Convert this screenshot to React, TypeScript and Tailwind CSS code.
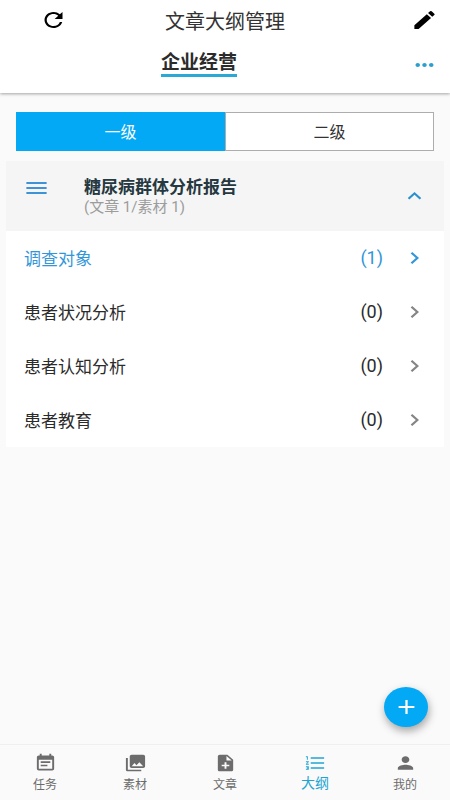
import { useState } from "react";
import type { IconType } from "react-icons";
import {
  MdAdd,
  MdEdit,
  MdEventNote,
  MdFormatListNumbered,
  MdKeyboardArrowRight,
  MdKeyboardArrowUp,
  MdMenu,
  MdMoreHoriz,
  MdNoteAdd,
  MdPerson,
  MdPhotoLibrary,
  MdRefresh,
} from "react-icons/md";

const rows = [
  { name: "调查对象", count: 1 },
  { name: "患者状况分析", count: 0 },
  { name: "患者认知分析", count: 0 },
  { name: "患者教育", count: 0 },
];

const navItems: { label: string; icon: IconType }[] = [
  { label: "任务", icon: MdEventNote },
  { label: "素材", icon: MdPhotoLibrary },
  { label: "文章", icon: MdNoteAdd },
  { label: "大纲", icon: MdFormatListNumbered },
  { label: "我的", icon: MdPerson },
];

function Icon({ of: Glyph, small = false }: { of: IconType; small?: boolean }) {
  return <Glyph preserveAspectRatio="none" aria-hidden className={small ? "h-5 w-[23px]" : "h-6 w-[27px]"} />;
}

export default function App() {
  const [level, setLevel] = useState(0);
  const [open, setOpen] = useState(true);

  return (
    <div className="flex min-h-screen flex-col bg-[#fafafa] font-[Roboto,'Noto_Sans_CJK_SC',sans-serif] text-[#2b2b2b]">
      <header className="bg-white pb-4 shadow-[0_1px_3px_rgba(0,0,0,0.35)]">
        <div className="grid h-11 grid-cols-3 items-center pr-3 pl-10 text-black">
          <button aria-label="刷新" className="justify-self-start pb-1">
            <Icon of={MdRefresh} />
          </button>
          <h1 className="-ml-7 justify-self-center text-xl leading-6 whitespace-nowrap text-[#333]">文章大纲管理</h1>
          <button aria-label="编辑" className="justify-self-end pb-1">
            <Icon of={MdEdit} />
          </button>
        </div>
        <div className="grid grid-cols-[20fr_auto_27fr] items-center px-3 pt-2">
          <a href="#category" className="col-start-2 border-b-3 border-[#2ba9d6] text-[19px] leading-[22px] font-bold">
            企业经营
          </a>
          <button aria-label="更多" className="justify-self-end text-[#2ba0d0]">
            <Icon of={MdMoreHoriz} />
          </button>
        </div>
      </header>

      <main className="flex-1 px-1.5 pt-[19px]">
        <div className="mx-2.5 flex h-[39px]">
          {["一级", "二级"].map((label, i) => (
            <button
              key={label}
              aria-pressed={level === i}
              onClick={() => setLevel(i)}
              className={
                level === i
                  ? "flex-1 border border-[#03a9f4] bg-[#03a9f4] pt-0.5 text-base text-white"
                  : "flex-1 border border-[#adadad] bg-white pt-0.5 text-base text-[#333]"
              }
            >
              {label}
            </button>
          ))}
        </div>

        <section className="mt-2.5 bg-white">
          <div className="flex h-[70px] items-center bg-[#f5f5f5] pr-4 pl-[17px]">
            <button aria-label="菜单" className="mb-4 text-[#3d93d6]">
              <Icon of={MdMenu} />
            </button>
            <div className="ml-[34px] flex-1 pt-0.5">
              <h2 className="text-[17px] leading-5 font-bold text-[#263840]">糖尿病群体分析报告</h2>
              <p className="text-[15px] leading-5 text-[#9c9c9c]">(文章 1/素材 1)</p>
            </div>
            <button
              aria-label="展开或收起"
              aria-expanded={open}
              onClick={() => setOpen(!open)}
              className="text-[#2b8fd0]"
            >
              <Icon of={MdKeyboardArrowUp} />
            </button>
          </div>
          {open && (
            <ul>
              {rows.map((row) => (
                <li key={row.name}>
                  <a
                    href="#outline"
                    className={
                      row.count > 0
                        ? "flex h-[54px] items-center pr-4 pl-[18px] text-[#3296d8]"
                        : "flex h-[54px] items-center pr-4 pl-[18px]"
                    }
                  >
                    <span className="flex-1 pt-1 text-[17px]">{row.name}</span>
                    <span className="text-lg">({row.count})</span>
                    <span className={row.count > 0 ? "ml-[18px]" : "ml-[18px] text-[#858585]"}>
                      <Icon of={MdKeyboardArrowRight} />
                    </span>
                  </a>
                </li>
              ))}
            </ul>
          )}
        </section>
      </main>

      <footer className="sticky bottom-0">
        <button
          aria-label="添加"
          className="absolute right-[22px] bottom-[73px] flex h-10 w-11 items-center justify-center rounded-[50%] bg-[#03a9f4] text-white shadow-[1px_4px_8px_rgba(0,0,0,0.35)]"
        >
          <Icon of={MdAdd} />
        </button>
        <nav className="flex h-14 border-t border-[#efefef] bg-[#fafafa]">
          {navItems.map(({ label, icon }) => (
            <a
              key={label}
              href="#nav"
              className={
                label === "大纲"
                  ? "flex flex-1 flex-col items-center pt-2 text-sm leading-5 text-[#1fa5d2]"
                  : "flex flex-1 flex-col items-center gap-0.5 pt-2 text-xs leading-5 text-[#6c6c6c]"
              }
            >
              <Icon of={icon} small />
              {label}
            </a>
          ))}
        </nav>
      </footer>
    </div>
  );
}
